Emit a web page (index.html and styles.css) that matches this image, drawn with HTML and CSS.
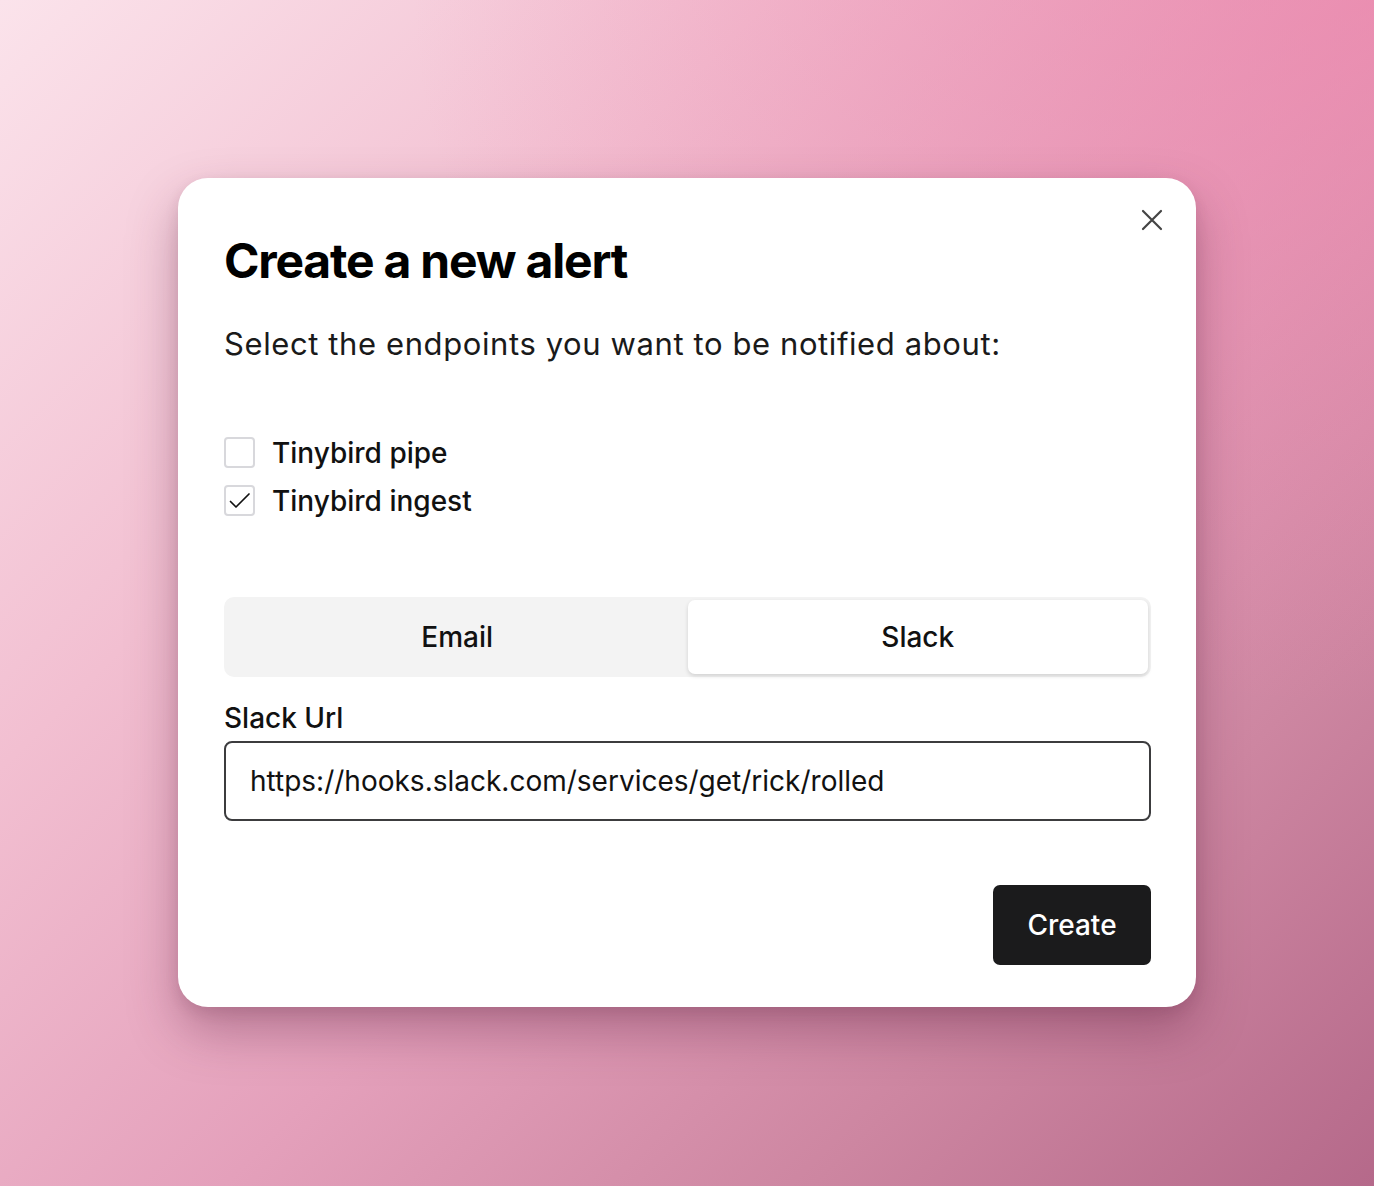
FILE: index.html
```html
<!DOCTYPE html>
<html lang="en">
<head>
<meta charset="utf-8">
<title>Create a new alert</title>
<link rel="stylesheet" href="styles.css">
</head>
<body>
<div class="stage">
  <div class="modal">
    <button class="close" aria-label="Close">
      <svg width="22" height="22" viewBox="0 0 22 22"><path d="M2 2L20 20M20 2L2 20" stroke="#444" stroke-width="2.2" stroke-linecap="round" fill="none"/></svg>
    </button>
    <h1 class="title">Create a new alert</h1>
    <p class="subtitle">Select the endpoints you want to be notified about:</p>
    <div class="checks">
      <label class="check">
        <span class="box"></span>
        <span class="check-label">Tinybird pipe</span>
      </label>
      <label class="check">
        <span class="box">
          <svg width="23" height="23" viewBox="0 0 23 23"><path d="M2.5 12.5L8 18L21 5" stroke="#111" stroke-width="1.7" fill="none" stroke-linecap="round" stroke-linejoin="round"/></svg>
        </span>
        <span class="check-label">Tinybird ingest</span>
      </label>
    </div>
    <div class="tabs">
      <div class="tab">Email</div>
      <div class="tab active">Slack</div>
    </div>
    <div class="field-label">Slack Url</div>
    <div class="input">https://hooks.slack.com/services/get/rick/rolled</div>
    <div class="actions">
      <button class="create">Create</button>
    </div>
  </div>
</div>
</body>
</html>
```

FILE: styles.css
```css
html, body {
  margin: 0;
  padding: 0;
  height: 100%;
}
body {
  font-family: Inter, "Noto Sans", sans-serif;
  color: #111;
}
.stage {
  width: 1374px;
  height: 1186px;
  box-sizing: border-box;
  padding-top: 178px;
  padding-left: 178px;
  background:
    radial-gradient(ellipse 70% 60% at 100% 0%, rgba(238, 130, 170, 0.6), rgba(238, 130, 170, 0) 100%),
    linear-gradient(135deg, #fbe3eb 0%, #f2bfd1 30%, #e4a0bb 55%, #cd86a1 78%, #b5698a 100%);
}
.modal {
  position: relative;
  width: 1018px;
  height: 829px;
  box-sizing: border-box;
  background: #fff;
  border-radius: 30px;
  padding: 54px 45px 0 46px;
  box-shadow: 0 24px 50px rgba(90, 30, 60, 0.35), 0 6px 14px rgba(90, 30, 60, 0.12);
  display: flex;
  flex-direction: column;
}
.close {
  position: absolute;
  right: 33px;
  top: 31px;
  width: 22px;
  height: 22px;
  padding: 0;
  border: 0;
  background: none;
}
.title {
  margin: 0;
  font-size: 48px;
  line-height: 58px;
  font-weight: 700;
  letter-spacing: -0.025em;
  color: #000;
}
.subtitle {
  margin: 36px 0 0;
  font-size: 31px;
  line-height: 36px;
  font-weight: 400;
  letter-spacing: 0.6px;
  color: #1a1a1a;
}
.checks {
  margin-top: 75px;
  display: flex;
  flex-direction: column;
  gap: 17px;
}
.check {
  display: flex;
  align-items: center;
  gap: 17px;
  height: 31px;
}
.box {
  width: 31px;
  height: 31px;
  box-sizing: border-box;
  border: 2px solid #d8d8dc;
  border-radius: 4px;
  display: flex;
  align-items: center;
  justify-content: center;
}
.check-label {
  font-size: 28px;
  font-weight: 500;
  color: #111;
}
.tabs {
  margin-top: 81px;
  height: 80px;
  background: #f3f3f3;
  border-radius: 10px;
  display: flex;
  padding: 3px;
  box-sizing: border-box;
}
.tab {
  flex: 1;
  display: flex;
  align-items: center;
  justify-content: center;
  font-size: 28px;
  font-weight: 500;
  color: #111;
  border-radius: 7px;
}
.tab.active {
  background: #fff;
  box-shadow: 0 2px 4px rgba(0, 0, 0, 0.14);
}
.field-label {
  margin-top: 24px;
  font-size: 28px;
  line-height: 34px;
  font-weight: 500;
  color: #111;
}
.input {
  margin-top: 6px;
  height: 80px;
  box-sizing: border-box;
  border: 2px solid #3c3c3e;
  border-radius: 8px;
  padding: 0 24px;
  display: flex;
  align-items: center;
  font-size: 28px;
  color: #111;
}
.actions {
  margin-top: 64px;
  display: flex;
  justify-content: flex-end;
}
.create {
  width: 158px;
  height: 80px;
  border: 0;
  border-radius: 7px;
  background: #1b1b1c;
  color: #fff;
  font-family: Inter, "Noto Sans", sans-serif;
  font-size: 28px;
  font-weight: 500;
}
```
